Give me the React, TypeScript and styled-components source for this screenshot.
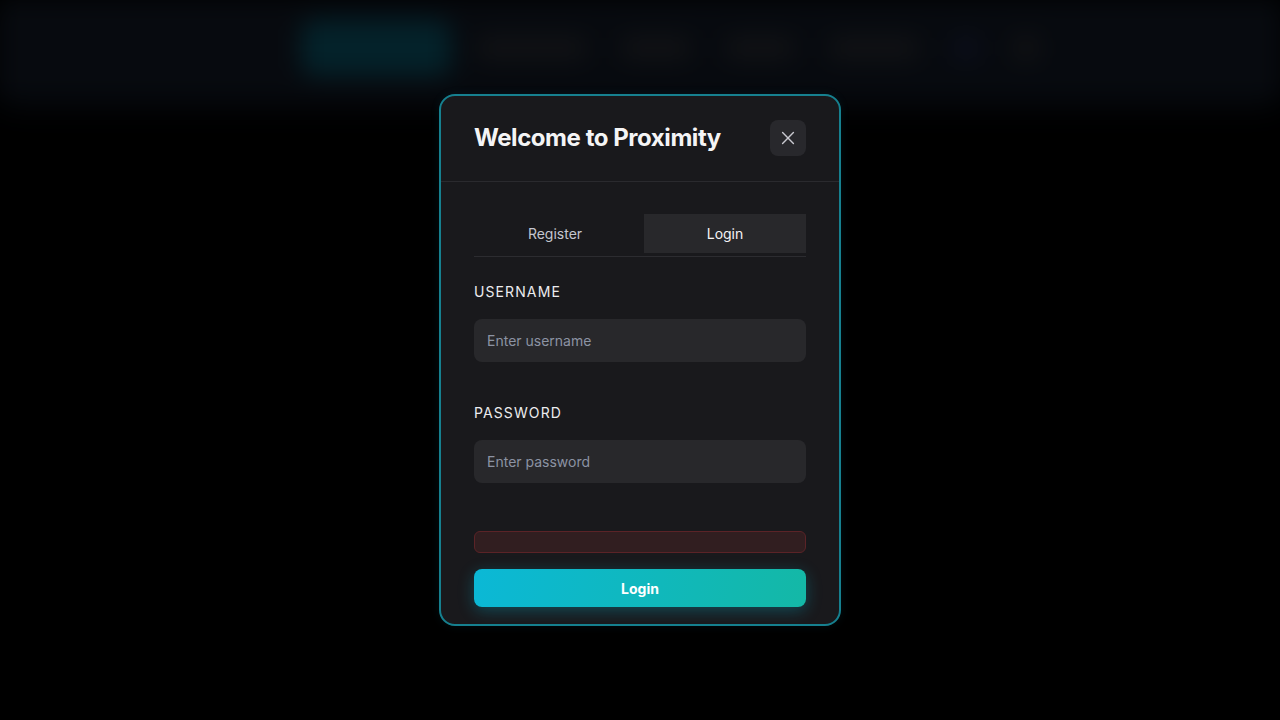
import React from "react";
import styled, { createGlobalStyle } from "styled-components";

const Global = createGlobalStyle`
  html, body { margin: 0; padding: 0; background: #000; height: 100%; }
  body { font-family: Inter, "Noto Sans", sans-serif; color: #f4f4f5; }
  #root { min-height: 100vh; }
  * { box-sizing: border-box; }
`;

const Page = styled.div`
  position: relative;
  width: 1280px;
  height: 720px;
  overflow: hidden;
  background: #000;
`;

const NavBar = styled.header`
  height: 96px;
  background: #070a0f;
  display: flex;
  align-items: center;
  justify-content: center;
  gap: 34px;
  padding-left: 60px;
  filter: blur(12px);
  box-shadow: 0 6px 24px rgba(10, 14, 22, 0.9);
`;

const NavBrand = styled.div`
  width: 150px;
  height: 56px;
  border-radius: 14px;
  background: #04222a;
  margin-right: -8px;
`;

const NavItem = styled.div<{ $w: number }>`
  width: ${(p) => p.$w}px;
  height: 24px;
  border-radius: 8px;
  background: #111215;
`;

const NavDot = styled.div<{ $c: string }>`
  width: 26px;
  height: 26px;
  border-radius: 13px;
  background: ${(p) => p.$c};
`;

const Overlay = styled.div`
  position: absolute;
  inset: 0;
  display: flex;
  align-items: center;
  justify-content: center;
`;

const Modal = styled.div`
  width: 402px;
  height: 532px;
  background: #19191c;
  border: 2px solid #16808f;
  border-radius: 16px;
  box-shadow: 0 0 10px rgba(8, 145, 178, 0.1);
  display: flex;
  flex-direction: column;
`;

const Header = styled.div`
  height: 86px;
  display: flex;
  align-items: center;
  justify-content: space-between;
  padding: 0 33px 2px 33px;
  border-bottom: 1px solid #2a2a2e;
`;

const Title = styled.h2`
  margin: 0;
  font-size: 24px;
  font-weight: 700;
  letter-spacing: -0.45px;
  color: #f4f4f5;
`;

const CloseBtn = styled.button`
  width: 36px;
  height: 36px;
  border: none;
  border-radius: 8px;
  background: #28282c;
  display: flex;
  align-items: center;
  justify-content: center;
  padding: 0;
  color: #c8c8cf;
`;

const Body = styled.div`
  padding: 32px 33px 0 33px;
  display: flex;
  flex-direction: column;
`;

const Tabs = styled.div`
  display: grid;
  grid-template-columns: 1fr 1fr;
  column-gap: 8px;
  height: 43px;
  border-bottom: 1px solid #2c2c30;
  padding-bottom: 3px;
`;

const Tab = styled.button<{ $active?: boolean }>`
  border: none;
  background: ${(p) => (p.$active ? "#28282b" : "transparent")};
  color: ${(p) => (p.$active ? "#f4f4f5" : "#c4c6cf")};
  font-family: Inter, sans-serif;
  font-size: 14px;
  font-weight: 400;
  padding: 0;
`;

const Field = styled.div<{ $mt: number }>`
  margin-top: ${(p) => p.$mt}px;
  display: flex;
  flex-direction: column;
`;

const Label = styled.label`
  font-size: 14px;
  font-weight: 400;
  letter-spacing: 1.1px;
  color: #ececef;
  line-height: 17px;
`;

const Input = styled.input<{ $mt: number }>`
  margin-top: ${(p) => p.$mt}px;
  height: 43px;
  width: 100%;
  border: none;
  border-radius: 8px;
  background: #28282b;
  padding: 0 13px;
  font-family: Inter, sans-serif;
  font-size: 14px;
  color: #f4f4f5;
  outline: none;
  &::placeholder { color: #8c93a3; }
`;

const ErrorBox = styled.div`
  margin-top: 48px;
  height: 22px;
  border-radius: 6px;
  background: #311e20;
  border: 1px solid #5b2327;
`;

const Submit = styled.button`
  margin-top: 16px;
  height: 38px;
  border: none;
  border-radius: 8px;
  background: linear-gradient(100deg, #0bb8d6 0%, #14b8a6 100%);
  color: #fff;
  font-family: Inter, sans-serif;
  font-size: 14px;
  font-weight: 700;
  box-shadow: 0 4px 16px rgba(6, 182, 212, 0.3);
`;

export default function App() {
  return (
    <Page>
      <Global />
      <NavBar>
        <NavBrand />
        <NavItem $w={110} />
        <NavItem $w={70} />
        <NavItem $w={70} />
        <NavItem $w={90} />
        <NavDot $c="#0c0f1d" />
        <NavDot $c="#131315" />
      </NavBar>
      <Overlay>
        <Modal>
          <Header>
            <Title>Welcome to Proximity</Title>
            <CloseBtn aria-label="Close">
              <svg width="20" height="20" viewBox="0 0 24 24" fill="none" stroke="currentColor" strokeWidth="1.7" strokeLinecap="round">
                <path d="M5.5 5.5l13 13M18.5 5.5l-13 13" />
              </svg>
            </CloseBtn>
          </Header>
          <Body>
            <Tabs>
              <Tab>Register</Tab>
              <Tab $active>Login</Tab>
            </Tabs>
            <Field $mt={26}>
              <Label>USERNAME</Label>
              <Input $mt={19} placeholder="Enter username" />
            </Field>
            <Field $mt={42}>
              <Label>PASSWORD</Label>
              <Input $mt={19} type="password" placeholder="Enter password" />
            </Field>
            <ErrorBox />
            <Submit>Login</Submit>
          </Body>
        </Modal>
      </Overlay>
    </Page>
  );
}
